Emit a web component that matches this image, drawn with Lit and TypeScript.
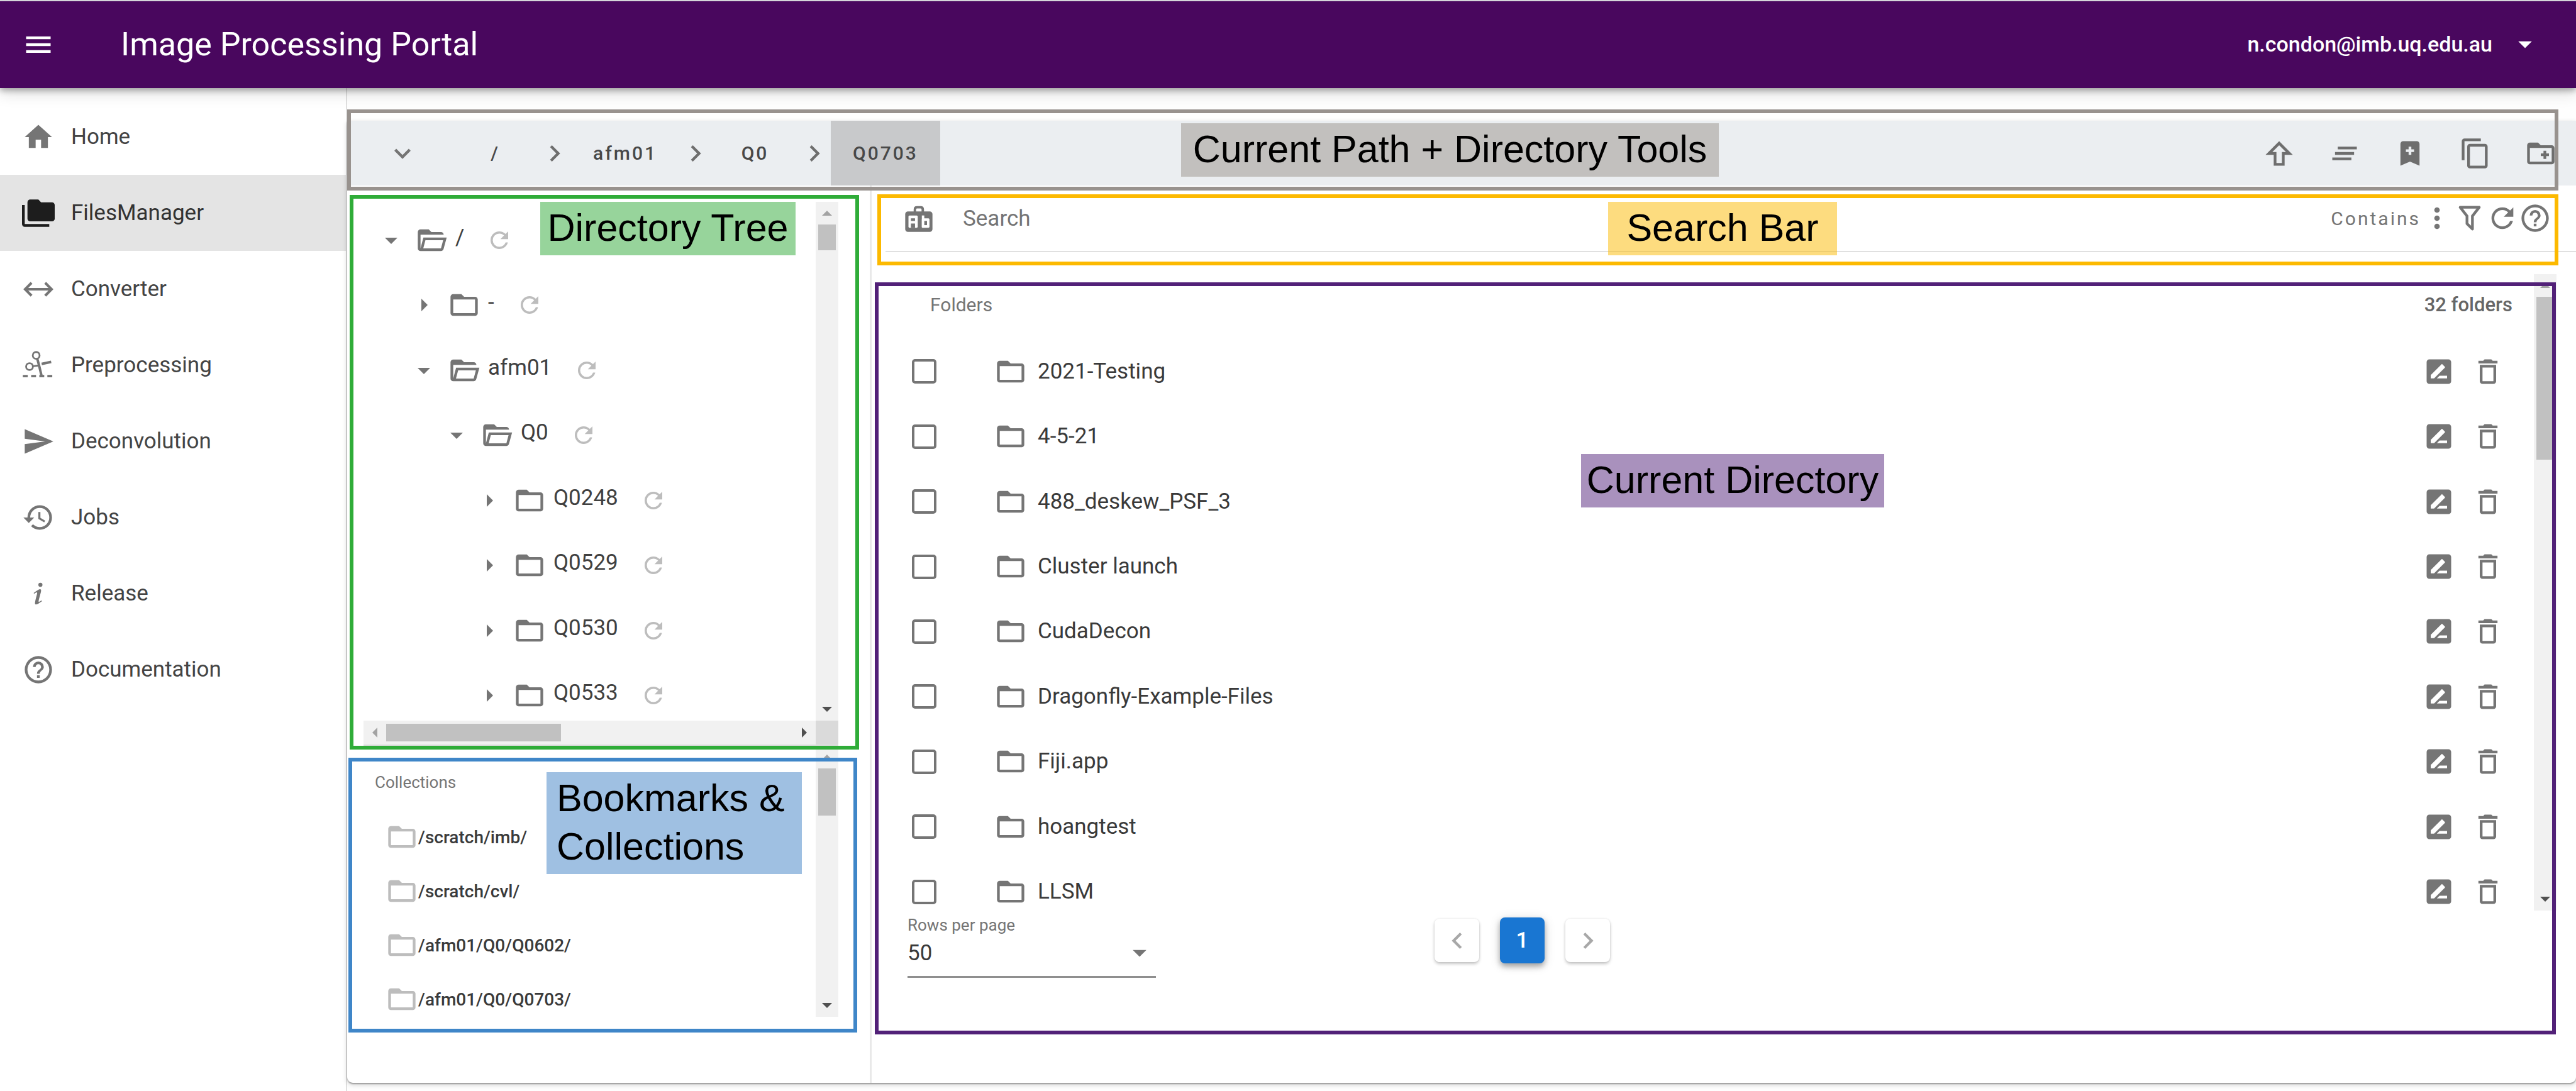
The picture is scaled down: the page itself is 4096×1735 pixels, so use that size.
import { LitElement, html, css, svg, nothing } from "lit";
import { customElement, property, state } from "lit/decorators.js";

/** 24-unit icon outlines, keyed by name. */
const ICONS: Record<string, string> = {
  menu: "M3,6H21V8H3V6M3,11H21V13H3V11M3,16H21V18H3V16Z",
  home: "M10,20V14H14V20H19V12H22L12,3L2,12H5V20H10Z",
  files:
    "M22,4H14L12,2H6A2,2 0 0,0 4,4V16A2,2 0 0,0 6,18H22A2,2 0 0,0 24,16V6A2,2 0 0,0 22,4M2,6H0V11H0V20A2,2 0 0,0 2,22H20V20H2V6Z",
  send: "M2,21L23,12L2,3V10L17,12L2,14V21Z",
  history:
    "M13.5,8H12V13L16.28,15.54L17,14.33L13.5,12.25V8M13,3A9,9 0 0,0 4,12H1L4.96,16.03L9,12H6A7,7 0 0,1 13,5A7,7 0 0,1 20,12A7,7 0 0,1 13,19C11.07,19 9.32,18.21 8.06,16.94L6.64,18.36C8.27,20 10.5,21 13,21A9,9 0 0,0 22,12A9,9 0 0,0 13,3",
  info: "M13.5,4A1.5,1.5 0 0,0 12,5.5A1.5,1.5 0 0,0 13.5,7A1.5,1.5 0 0,0 15,5.5A1.5,1.5 0 0,0 13.5,4M13.14,8.77C11.95,8.87 8.7,11.46 8.7,11.46C8.5,11.61 8.56,11.6 8.72,11.88C8.88,12.15 8.86,12.17 9.05,12.04C9.25,11.91 9.58,11.7 10.13,11.36C12.25,10 10.47,13.14 9.56,18.43C9.2,21.05 11.56,19.7 12.17,19.3C12.77,18.91 14.38,17.8 14.54,17.69C14.76,17.54 14.6,17.42 14.43,17.17C14.31,17 14.19,17.12 14.19,17.12C13.54,17.55 12.35,18.45 12.19,17.88C12,17.31 13.22,13.4 13.89,10.71C14,10.07 14.3,8.67 13.14,8.77Z",
  help: "M11,18H13V16H11V18M12,2A10,10 0 0,0 2,12A10,10 0 0,0 12,22A10,10 0 0,0 22,12A10,10 0 0,0 12,2M12,20C7.59,20 4,16.41 4,12C4,7.59 7.59,4 12,4C16.41,4 20,7.59 20,12C20,16.41 16.41,20 12,20M12,6A4,4 0 0,0 8,10H10A2,2 0 0,1 12,8A2,2 0 0,1 14,10C14,12 11,11.75 11,15H13C13,12.75 16,12.5 16,10A4,4 0 0,0 12,6Z",
  menuDown: "M7,10L12,15L17,10H7Z",
  menuRight: "M10,17L15,12L10,7V17Z",
  chevronDown: "M7.41,8.58L12,13.17L16.59,8.58L18,10L12,16L6,10L7.41,8.58Z",
  chevronRight: "M8.59,16.58L13.17,12L8.59,7.41L10,6L16,12L10,18L8.59,16.58Z",
  chevronLeft: "M15.41,16.58L10.83,12L15.41,7.41L14,6L8,12L14,18L15.41,16.58Z",
  up: "M16,13V21H8V13H2L12,3L22,13H16M7,11H10V19H14V11H17L12,6L7,11Z",
  clear: "M5,13H19V11H5V13M3,17H17V15H3V17M7,7V9H21V7H7Z",
  bookmark:
    "M17,3A2,2 0 0,1 19,5V21L12,18L5,21V5C5,3.89 5.9,3 7,3H17M11,7V9H9V11H11V13H13V11H15V9H13V7H11Z",
  copy: "M19,21H8V7H19M19,5H8A2,2 0 0,0 6,7V21A2,2 0 0,0 8,23H19A2,2 0 0,0 21,21V7A2,2 0 0,0 19,5M16,1H4A2,2 0 0,0 2,3V17H4V3H16V1Z",
  folderPlus:
    "M12,12H14V10H16V12H18V14H16V16H14V14H12V12M22,8V18C22,19.11 21.11,20 20,20H4C2.89,20 2,19.11 2,18V6C2,4.89 2.89,4 4,4H10L12,6H20C21.11,6 22,6.89 22,8M20,8H4V18H20V8Z",
  folder:
    "M20,18H4V8H20M20,6H12L10,4H4C2.89,4 2,4.89 2,6V18A2,2 0 0,0 4,20H20A2,2 0 0,0 22,18V8C22,6.89 21.1,6 20,6Z",
  folderOpen:
    "M6.1,10L4,18V8H21A2,2 0 0,0 19,6H12L10,4H4A2,2 0 0,0 2,6V18A2,2 0 0,0 4,20H19C19.9,20 20.7,19.4 20.9,18.5L23.2,10H6.1M19,18H6L7.6,12H20.6L19,18Z",
  refresh:
    "M17.65,6.35C16.2,4.9 14.21,4 12,4A8,8 0 0,0 4,12A8,8 0 0,0 12,20C15.73,20 18.84,17.45 19.73,14H17.65C16.83,16.33 14.61,18 12,18A6,6 0 0,1 6,12A6,6 0 0,1 12,6C13.66,6 15.14,6.69 16.22,7.78L13,11H20V4L17.65,6.35Z",
  dots: "M12,16A2,2 0 0,1 14,18A2,2 0 0,1 12,20A2,2 0 0,1 10,18A2,2 0 0,1 12,16M12,10A2,2 0 0,1 14,12A2,2 0 0,1 12,14A2,2 0 0,1 10,12A2,2 0 0,1 12,10M12,4A2,2 0 0,1 14,6A2,2 0 0,1 12,8A2,2 0 0,1 10,6A2,2 0 0,1 12,4Z",
  filter:
    "M15,19.88C15.04,20.18 14.94,20.5 14.71,20.71C14.32,21.1 13.69,21.1 13.3,20.71L9.29,16.7C9.06,16.47 8.96,16.16 9,15.87V10.75L4.21,4.62C3.87,4.19 3.95,3.56 4.38,3.22C4.57,3.08 4.78,3 5,3V3H19V3C19.22,3 19.43,3.08 19.62,3.22C20.05,3.56 20.13,4.19 19.79,4.62L15,10.75V19.88M7.04,5L11,10.06V15.58L13,17.58V10.05L16.96,5H7.04Z",
  rename:
    "M18,17H10.5L12.5,15H18M6,17V14.5L13.88,6.65C14.07,6.45 14.39,6.45 14.59,6.65L16.35,8.41C16.55,8.61 16.55,8.92 16.35,9.12L8.47,17M19,3H5C3.89,3 3,3.89 3,5V19A2,2 0 0,0 5,21H19A2,2 0 0,0 21,19V5C21,3.89 20.1,3 19,3Z",
  trash:
    "M6,19A2,2 0 0,0 8,21H16A2,2 0 0,0 18,19V7H6V19M8,9H16V19H8V9M15.5,4L14.5,3H9.5L8.5,4H5V6H19V4H15.5Z",
};

/** Icons that are built from several shapes. */
const DRAWINGS: Record<string, unknown> = {
  converter: svg`<path d="M2.5,12H21.5M7,7.3L2.3,12L7,16.7M17,7.3L21.7,12L17,16.7" fill="none" stroke="currentColor" stroke-width="1.9"/>`,
  cut: svg`<g fill="none" stroke="currentColor" stroke-width="1.3">
      <circle cx="10.4" cy="4.7" r="2.5"/><circle cx="5.5" cy="12.9" r="2.5"/>
      <path d="M11.2,7.2L12.5,12L14.3,19.5" stroke-width="1.8"/>
      <path d="M8,12.6L13,12"/><path d="M14.4,11L21.4,9.5" stroke-width="1.9"/>
    </g><path d="M.6,19H4.2V20.8H.6ZM6.7,19H10.3V20.8H6.7ZM12.7,19H16.3V20.8H12.7ZM18.6,19H22.2V20.8H18.6Z"/>`,
  bag: svg`<path d="M9.1,7.5V5.6Q9.1,4 10.6,4H13.4Q14.9,4 14.9,5.6V7.5" fill="none" stroke="currentColor" stroke-width="1.8"/>
    <rect x="2" y="7" width="20" height="15" rx="2"/>
    <g fill="#fff"><rect x="4.4" y="10" width="6.8" height="9" rx=".8"/><rect x="14.2" y="10" width="1.8" height="9"/><rect x="14.2" y="12.1" width="5.6" height="6.9" rx=".8"/></g>
    <rect x="6.2" y="12.1" width="3" height="1.9"/><rect x="6.2" y="15.9" width="3" height="3.1"/><rect x="16" y="14" width="2" height="3.1"/>`,
};

const icon = (name: string, size = "") =>
  html`<svg class="icon ${size}" viewBox="0 0 24 24" fill="currentColor" aria-hidden="true">
    ${DRAWINGS[name] ?? svg`<path d=${ICONS[name]}></path>`}
  </svg>`;

const shared = css`
  :host {
    display: block;
    font-family: Roboto, "Liberation Sans", sans-serif;
    font-size: 35px;
    color: #3a3a3a;
  }
  * {
    box-sizing: border-box;
  }
  button,
  input,
  select {
    font: inherit;
    color: inherit;
    background: none;
    border: 0;
    margin: 0;
    padding: 0;
    border-radius: 0;
    letter-spacing: inherit;
  }
  button {
    display: inline-flex;
    align-items: center;
    justify-content: center;
    flex: none;
  }
  a {
    color: inherit;
    text-decoration: none;
  }
  ul {
    list-style: none;
    margin: 0;
    padding: 0;
  }
  .icon {
    width: 52px;
    height: 52px;
    flex: none;
    display: block;
  }
  .icon.small {
    width: 42px;
    height: 42px;
  }
`;

@customElement("scroll-bar")
class ScrollBar extends LitElement {
  @property({ type: Boolean, reflect: true }) horizontal = false;
  /** Share of the free track that the thumb covers, in percent. */
  @property({ type: Number }) thumb = 20;

  static styles = css`
    :host {
      display: flex;
      flex-direction: column;
      width: 36px;
      background: #f1f1f1;
    }
    :host([horizontal]) {
      flex-direction: row;
      width: auto;
      height: 38px;
    }
    .end {
      flex: 0 0 36px;
      display: flex;
      align-items: center;
      justify-content: center;
    }
    .tri {
      border: 8px solid transparent;
    }
    .up {
      border-top-width: 0;
      border-bottom-color: #a3a3a3;
    }
    .down {
      border-bottom-width: 0;
      border-top-color: #505050;
    }
    .left {
      border-left-width: 0;
      border-right-color: #a3a3a3;
    }
    .right {
      border-right-width: 0;
      border-left-color: #505050;
    }
    .track {
      flex: 1;
      min-height: 0;
      padding: 0 4px;
    }
    :host([horizontal]) .track {
      padding: 5px 0;
    }
    .thumb {
      background: #c1c1c1;
      height: 100%;
      width: 100%;
    }
  `;

  render() {
    const size = this.horizontal ? `width:${this.thumb}%` : `height:${this.thumb}%`;
    return html`
      <span class="end"><i class="tri ${this.horizontal ? "left" : "up"}"></i></span>
      <div class="track"><div class="thumb" style=${size}></div></div>
      <span class="end"><i class="tri ${this.horizontal ? "right" : "down"}"></i></span>
    `;
  }
}

@customElement("app-header")
class AppHeader extends LitElement {
  static styles = [
    shared,
    css`
      .bar {
        height: 140px;
        border-top: 2px solid #d5d5da;
        background: #49075e;
        color: #fff;
        display: flex;
        align-items: center;
        padding: 0 55px 0 35px;
        position: relative;
        z-index: 2;
        box-shadow: 0 4px 9px rgba(0, 0, 0, 0.3), 0 10px 22px rgba(0, 0, 0, 0.12);
      }
      h1 {
        margin: 0 auto 0 105px;
        font-size: 52px;
        font-weight: 400;
        line-height: 70px;
      }
      .user {
        font-weight: 500;
        font-size: 34px;
        gap: 26px;
        padding-bottom: 2px;
      }
    `,
  ];
  render() {
    return html`<header class="bar">
      <button aria-label="Toggle menu">${icon("menu")}</button>
      <h1>Image Processing Portal</h1>
      <button class="user">n.condon@imb.uq.edu.au ${icon("menuDown")}</button>
    </header>`;
  }
}

const NAV = [
  ["home", "Home"],
  ["files", "FilesManager"],
  ["converter", "Converter"],
  ["cut", "Preprocessing"],
  ["send", "Deconvolution"],
  ["history", "Jobs"],
  ["info", "Release"],
  ["help", "Documentation"],
];

@customElement("side-nav")
class SideNav extends LitElement {
  @state() private active = "FilesManager";
  static styles = [
    shared,
    css`
      nav {
        padding-top: 17px;
      }
      a {
        height: 121px;
        display: flex;
        align-items: center;
        gap: 26px;
        padding-left: 35px;
        color: #444;
      }
      .icon {
        color: #757575;
      }
      .active {
        background: #e4e4e4;
        color: #333;
      }
      .active .icon {
        color: #1d1d1d;
      }
    `,
  ];
  render() {
    return html`<nav aria-label="Main">
      ${NAV.map(
        ([glyph, label]) => html`<a
          href="#${label}"
          class=${label === this.active ? "active" : ""}
          @click=${() => (this.active = label)}
          >${icon(glyph)}<span>${label}</span></a
        >`
      )}
    </nav>`;
  }
}

@customElement("path-toolbar")
class PathToolbar extends LitElement {
  static styles = [
    shared,
    css`
      .bar {
        height: 103px;
        background: #ebeef1;
        display: flex;
        align-items: stretch;
        padding: 0 4px 0 9px;
        color: #6e6e6e;
      }
      .path {
        display: flex;
        align-items: center;
        flex: 1;
        font-size: 30px;
        font-weight: 500;
        letter-spacing: 3px;
      }
      .path button {
        height: 100%;
        min-width: 137px;
        padding: 0 35px;
        color: #484848;
      }
      .path .toggle {
        min-width: 158px;
        color: #757575;
      }
      .path .current {
        background: #c8c9cb;
      }
      .tool {
        width: 104px;
      }
    `,
  ];
  render() {
    const parts = ["/", "afm01", "Q0", "Q0703"];
    return html`<div class="bar">
      <div class="path">
        <button class="toggle" aria-label="Show path">${icon("chevronDown")}</button>
        ${parts.map(
          (part, i) => html`${i ? icon("chevronRight") : nothing}<button
              class=${i === parts.length - 1 ? "current" : ""}
            >
              ${part}
            </button>`
        )}
      </div>
      ${[
        ["up", "Upload"],
        ["clear", "Clear all"],
        ["bookmark", "Add bookmark"],
        ["copy", "Copy"],
        ["folderPlus", "New folder"],
      ].map(([glyph, label]) => html`<button class="tool" aria-label=${label}>${icon(glyph)}</button>`)}
    </div>`;
  }
}

interface TreeNode {
  name: string;
  level: number;
  open?: boolean;
}

const TREE: TreeNode[] = [
  { name: "/", level: 0, open: true },
  { name: "-", level: 1 },
  { name: "afm01", level: 1, open: true },
  { name: "Q0", level: 2, open: true },
  { name: "Q0248", level: 3 },
  { name: "Q0529", level: 3 },
  { name: "Q0530", level: 3 },
  { name: "Q0533", level: 3 },
];

@customElement("directory-tree")
class DirectoryTree extends LitElement {
  static styles = [
    shared,
    css`
      .pane {
        display: grid;
        grid-template: 825px 38px / 1fr 36px;
        border-bottom: 2px solid #dedede;
      }
      .view {
        overflow: hidden;
        padding: 9px 0 0 20px;
      }
      ul {
        height: 828px;
        display: grid;
        grid-auto-rows: 1fr;
      }
      li {
        display: flex;
        align-items: center;
        color: #757575;
      }
      .caret {
        margin-right: 14px;
      }
      .caret .icon {
        width: 48px;
        height: 48px;
      }
      .name {
        margin: 0 35px 8px 12px;
        line-height: 42px;
        color: #404040;
      }
      .again {
        color: #bdbdbd;
      }
      .corner {
        background: #dadada;
      }
    `,
  ];
  render() {
    return html`<div class="pane">
      <div class="view">
        <ul>
          ${TREE.map(
            (node) => html`<li style="padding-left:${node.level * 52}px">
              <button class="caret" aria-label="Toggle ${node.name}">
                ${icon(node.open ? "menuDown" : "menuRight")}
              </button>
              ${icon(node.open ? "folderOpen" : "folder")}
              <span class="name">${node.name}</span>
              <button class="again" aria-label="Refresh ${node.name}">${icon("refresh", "small")}</button>
            </li>`
          )}
        </ul>
      </div>
      <scroll-bar .thumb=${5.5}></scroll-bar>
      <scroll-bar horizontal .thumb=${43}></scroll-bar>
      <div class="corner"></div>
    </div>`;
  }
}

@customElement("collection-list")
class CollectionList extends LitElement {
  static styles = [
    shared,
    css`
      .pane {
        display: grid;
        grid-template-columns: 1fr 36px;
        height: 431px;
      }
      .view {
        overflow: hidden;
        padding: 40px 0 0 18px;
      }
      h2 {
        margin: 0 0 26px;
        font-size: 26px;
        line-height: 36px;
        font-weight: 400;
        color: #757575;
      }
      li {
        height: 86px;
        padding-left: 17px;
      }
      a {
        height: 100%;
        display: flex;
        align-items: center;
        font-size: 28px;
        font-weight: 500;
      }
      .icon {
        color: #bdbdbd;
      }
    `,
  ];
  render() {
    return html`<div class="pane">
      <div class="view">
        <h2>Collections</h2>
        <ul>
          ${["/scratch/imb/", "/scratch/cvl/", "/afm01/Q0/Q0602/", "/afm01/Q0/Q0703/"].map(
            (path) => html`<li><a href="#${path}">${icon("folder")}${path}</a></li>`
          )}
        </ul>
      </div>
      <scroll-bar .thumb=${21}></scroll-bar>
    </div>`;
  }
}

@customElement("search-bar")
class SearchBar extends LitElement {
  static styles = [
    shared,
    css`
      .row {
        height: 106px;
        border-bottom: 2px solid #e0e0e0;
        display: flex;
        align-items: center;
        padding: 0 39px 0 27px;
        color: #757575;
      }
      input {
        flex: 1;
        min-width: 0;
        height: 60px;
        margin-left: 44px;
        outline: 0;
      }
      input::placeholder {
        color: #757575;
        opacity: 1;
      }
      .mode {
        font-size: 30px;
        letter-spacing: 3px;
        color: #757575;
      }
    `,
  ];
  render() {
    return html`<div class="row">
      <button aria-label="Match case">${icon("bag")}</button>
      <input type="text" placeholder="Search" aria-label="Search" />
      <span class="mode">Contains</span>
      <button aria-label="Match mode">${icon("dots")}</button>
      <button aria-label="Filter">${icon("filter")}</button>
      <button aria-label="Refresh">${icon("refresh")}</button>
      <button aria-label="Help">${icon("help")}</button>
    </div>`;
  }
}

const FOLDERS = [
  "2021-Testing",
  "4-5-21",
  "488_deskew_PSF_3",
  "Cluster launch",
  "CudaDecon",
  "Dragonfly-Example-Files",
  "Fiji.app",
  "hoangtest",
  "LLSM",
];

@customElement("folder-table")
class FolderTable extends LitElement {
  static styles = [
    shared,
    css`
      .pane {
        display: grid;
        grid-template-columns: 1fr 36px;
        height: 1012px;
      }
      .view {
        overflow: hidden;
      }
      table {
        width: 100%;
        height: 1034px;
        border-collapse: collapse;
        table-layout: fixed;
      }
      .pick {
        width: 173px;
      }
      .acts {
        width: 240px;
      }
      th,
      td {
        padding: 0;
        text-align: left;
        vertical-align: middle;
      }
      th {
        height: 103px;
        font-size: 30px;
        font-weight: 400;
        color: #757575;
        padding: 0 0 6px 71px;
      }
      .count {
        text-align: right;
        font-size: 31px;
        font-weight: 500;
        color: #666;
        padding: 0 34px 6px 0;
      }
      input {
        appearance: none;
        display: block;
        width: 39px;
        height: 39px;
        margin-left: 42px;
        border: 4px solid #757575;
        border-radius: 5px;
      }
      .name {
        display: flex;
        align-items: center;
        gap: 17px;
        line-height: 42px;
      }
      .name .icon,
      .tools {
        color: #757575;
      }
      .tools {
        display: flex;
        justify-content: flex-end;
        gap: 26px;
        padding-right: 47px;
      }
    `,
  ];
  render() {
    return html`<div class="pane">
      <div class="view">
        <table>
          <colgroup>
            <col class="pick" />
            <col />
            <col class="acts" />
          </colgroup>
          <thead>
            <tr>
              <th colspan="2">Folders</th>
              <th class="count">32 folders</th>
            </tr>
          </thead>
          <tbody>
            ${FOLDERS.map(
              (name) => html`<tr>
                <td><input type="checkbox" aria-label="Select ${name}" /></td>
                <td><div class="name">${icon("folder")}<span>${name}</span></div></td>
                <td>
                  <div class="tools">
                    <button aria-label="Rename ${name}">${icon("rename")}</button>
                    <button aria-label="Delete ${name}">${icon("trash")}</button>
                  </div>
                </td>
              </tr>`
            )}
          </tbody>
        </table>
      </div>
      <scroll-bar .thumb=${27.5}></scroll-bar>
    </div>`;
  }
}

@customElement("table-pager")
class TablePager extends LitElement {
  static styles = [
    shared,
    css`
      .foot {
        display: flex;
        align-items: center;
        gap: 443px;
        padding: 8px 0 0 35px;
      }
      .rows {
        width: 395px;
        border-bottom: 3px solid #8f8f8f;
        display: grid;
        align-items: center;
        padding-bottom: 8px;
      }
      label {
        font-size: 26px;
        line-height: 30px;
        color: #757575;
      }
      select,
      .rows .icon {
        grid-area: 2 / 1;
      }
      select {
        appearance: none;
        height: 58px;
        width: 100%;
      }
      .rows .icon {
        justify-self: end;
        pointer-events: none;
        color: #757575;
      }
      .pages {
        display: flex;
        align-items: center;
        gap: 33px;
        padding-bottom: 20px;
      }
      .pages button {
        width: 71px;
        height: 69px;
        border-radius: 8px;
        color: #a8a8a8;
        background: #fff;
        box-shadow: 0 3px 5px rgba(0, 0, 0, 0.22), 0 0 3px rgba(0, 0, 0, 0.1);
      }
      .pages .on {
        height: 73px;
        background: #1976d2;
        color: #fff;
        font-weight: 500;
        box-shadow: 0 5px 8px rgba(0, 0, 0, 0.3), 0 3px 18px rgba(0, 0, 0, 0.14);
      }
    `,
  ];
  render() {
    return html`<div class="foot">
      <div class="rows">
        <label for="rows">Rows per page</label>
        <select id="rows">
          <option>50</option>
          <option>100</option>
        </select>
        ${icon("menuDown")}
      </div>
      <div class="pages">
        <button aria-label="Previous page">${icon("chevronLeft")}</button>
        <button class="on">1</button>
        <button aria-label="Next page">${icon("chevronRight")}</button>
      </div>
    </div>`;
  }
}

@customElement("app-root")
class AppRoot extends LitElement {
  static styles = [
    shared,
    css`
      :host {
        background: #fff;
      }
      .page {
        min-height: 100vh;
        display: flex;
        flex-direction: column;
        position: relative;
        overflow: hidden;
      }
      .body {
        flex: 1;
        display: flex;
      }
      side-nav {
        flex: 0 0 552px;
        border-right: 2px solid #e0e0e0;
      }
      main {
        flex: 1;
        min-width: 0;
        display: flex;
        flex-direction: column;
        padding: 52px 0 13px;
        background: #fefefe;
      }
      .card {
        flex: 1;
        display: flex;
        flex-direction: column;
        background: #fff;
        border-radius: 0 0 9px 9px;
        box-shadow: 0 2px 2px rgba(0, 0, 0, 0.3), 0 3px 8px rgba(0, 0, 0, 0.18);
      }
      .split {
        flex: 1;
        display: flex;
      }
      .left {
        flex: 0 0 834px;
        padding: 26px 50px 0 26px;
        border-right: 3px solid #e9e9e9;
      }
      .right {
        flex: 1;
        min-width: 0;
        padding-left: 22px;
      }
      .listing {
        padding: 35px 31px 0 0;
      }
      /* Annotation frames and captions laid over the page. */
      .frame {
        position: absolute;
        z-index: 3;
        border: 6px solid;
        pointer-events: none;
      }
      .frame.path {
        inset: 174px 28px auto 552px;
        height: 129px;
        border-color: #98928e;
      }
      .frame.tree {
        left: 556px;
        top: 310px;
        width: 810px;
        height: 882px;
        border-color: #2fac38;
      }
      .frame.marks {
        left: 554px;
        top: 1205px;
        width: 809px;
        height: 437px;
        border-color: #3f86c8;
      }
      .frame.search {
        inset: 309px 28px auto 1395px;
        height: 113px;
        border-color: #fcb900;
      }
      .frame.dir {
        inset: 449px 32px auto 1391px;
        height: 1196px;
        border-color: #522178;
      }
      .caption {
        position: absolute;
        z-index: 4;
        margin: 0;
        padding: 3px 0 5px;
        font: 61px/77px "Liberation Sans", Arial, sans-serif;
        color: #000;
        text-align: center;
        white-space: nowrap;
      }
      .caption.path {
        left: 1878px;
        top: 196px;
        width: 855px;
        background: #c2c0be;
      }
      .caption.tree {
        left: 859px;
        top: 321px;
        width: 406px;
        background: #97d49b;
      }
      .caption.search {
        left: 2557px;
        top: 321px;
        width: 364px;
        background: rgba(252, 185, 0, 0.5);
      }
      .caption.dir {
        left: 2514px;
        top: 722px;
        width: 482px;
        background: #a991bd;
      }
      .caption.marks {
        left: 869px;
        top: 1228px;
        width: 406px;
        padding-left: 16px;
        text-align: left;
        background: #9fc0e2;
      }
    `,
  ];
  render() {
    return html`<div class="page">
      <app-header></app-header>
      <div class="body">
        <side-nav></side-nav>
        <main>
          <section class="card">
            <path-toolbar></path-toolbar>
            <div class="split">
              <div class="left">
                <directory-tree></directory-tree>
                <collection-list></collection-list>
              </div>
              <div class="right">
                <search-bar></search-bar>
                <div class="listing"><folder-table></folder-table></div>
                <table-pager></table-pager>
              </div>
            </div>
          </section>
        </main>
      </div>
      <div class="frame path"></div>
      <div class="frame tree"></div>
      <div class="frame marks"></div>
      <div class="frame search"></div>
      <div class="frame dir"></div>
      <p class="caption path">Current Path + Directory Tools</p>
      <p class="caption tree">Directory Tree</p>
      <p class="caption search">Search Bar</p>
      <p class="caption dir">Current Directory</p>
      <p class="caption marks">Bookmarks &amp;<br />Collections</p>
    </div>`;
  }
}
